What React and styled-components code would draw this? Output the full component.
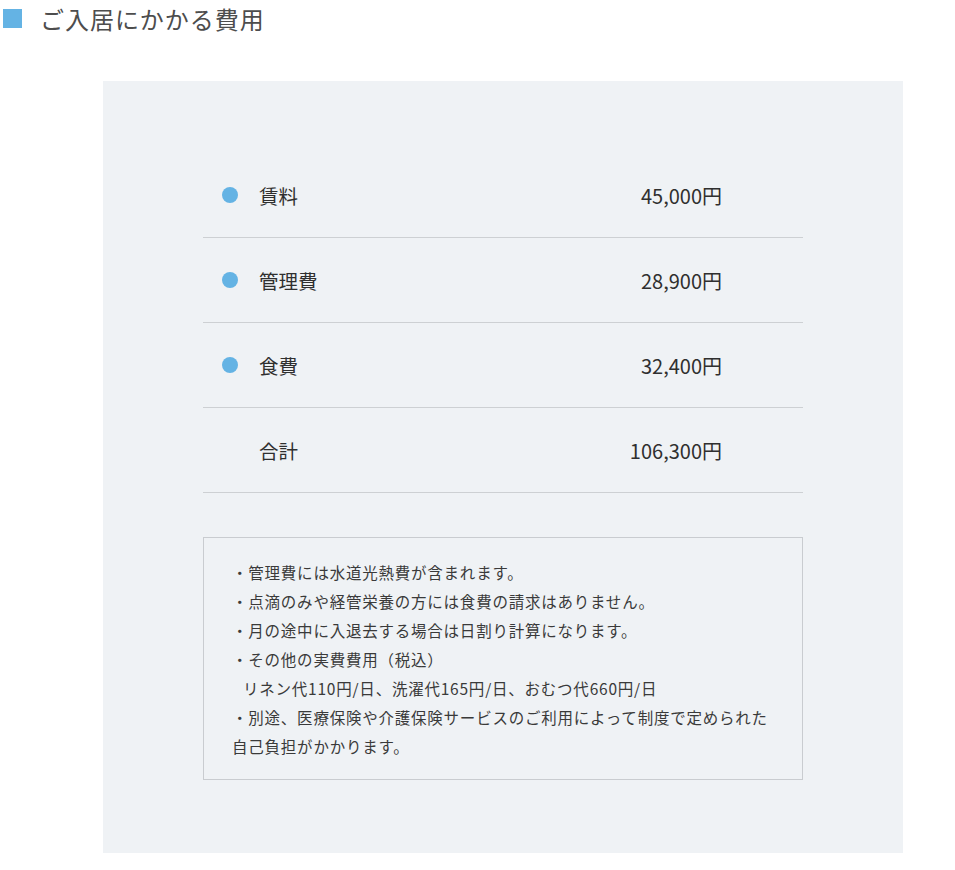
import React from "react";
import styled, { createGlobalStyle } from "styled-components";

const GlobalStyle = createGlobalStyle`
  body {
    margin: 0;
    background: #fff;
    font-family: "Noto Sans CJK JP", "Noto Sans", sans-serif;
    color: #333;
  }
`;

const Page = styled.div`
  width: 955px;
  padding-bottom: 18px;
`;

const Heading = styled.h2`
  display: flex;
  align-items: center;
  margin: 0;
  padding: 0 0 0 3px;
  height: 36px;
  font-size: 24px;
  font-weight: 400;
  letter-spacing: 0.04em;
  color: #4d4d4d;
  &::before {
    content: "";
    width: 19px;
    height: 19px;
    margin-right: 18px;
    background: #64b3e4;
  }
`;

const Panel = styled.section`
  margin: 45px 0 0 103px;
  width: 800px;
  padding: 72px 100px 73px;
  box-sizing: border-box;
  background: #eff2f5;
`;

const Row = styled.div`
  display: flex;
  align-items: center;
  height: 84px;
  padding: 0 81px 0 19px;
  border-bottom: 1px solid #cdd0d3;
`;

const Dot = styled.span`
  width: 16px;
  height: 16px;
  border-radius: 50%;
  background: ${p => (p.$blank ? "transparent" : "#64b3e4")};
  margin-right: 21px;
  flex-shrink: 0;
`;

const Label = styled.span`
  flex: 1;
  font-size: 19.5px;
  color: #2f2f2f;
`;

const Price = styled.span`
  font-size: 20px;
  color: #2f2f2f;
`;

const Notes = styled.ul`
  list-style: none;
  margin: 44px 0 0;
  padding: 20px 28px 18px;
  border: 1px solid #c9ccd0;
  font-size: 15.5px;
  line-height: 29px;
  letter-spacing: 0.05em;
  color: #3a3a3a;
`;

const Note = styled.li`
  padding-left: ${p => (p.$indent ? "11px" : "0")};
`;

const fees = [
  { label: "賃料", price: "45,000円" },
  { label: "管理費", price: "28,900円" },
  { label: "食費", price: "32,400円" },
  { label: "合計", price: "106,300円", total: true },
];

export default function App() {
  return (
    <Page>
      <GlobalStyle />
      <Heading>ご入居にかかる費用</Heading>
      <Panel>
        {fees.map(f => (
          <Row key={f.label}>
            <Dot $blank={f.total} />
            <Label>{f.label}</Label>
            <Price>{f.price}</Price>
          </Row>
        ))}
        <Notes>
          <Note>・管理費には水道光熱費が含まれます。</Note>
          <Note>・点滴のみや経管栄養の方には食費の請求はありません。</Note>
          <Note>・月の途中に入退去する場合は日割り計算になります。</Note>
          <Note>・その他の実費費用（税込）</Note>
          <Note $indent>リネン代110円/日、洗濯代165円/日、おむつ代660円/日</Note>
          <Note>・別途、医療保険や介護保険サービスのご利用によって制度で定められた</Note>
          <Note>自己負担がかかります。</Note>
        </Notes>
      </Panel>
    </Page>
  );
}
